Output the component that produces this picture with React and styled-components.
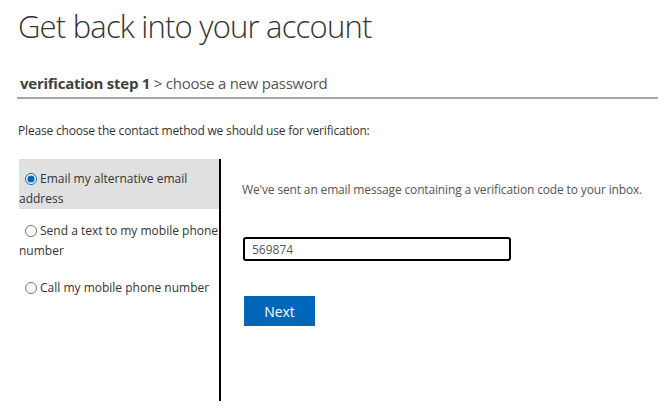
import React, { useState } from 'react';
import styled, { createGlobalStyle } from 'styled-components';

const GlobalStyle = createGlobalStyle`
  body {
    margin: 0;
    background: #fff;
    font-family: "Open Sans", "Noto Sans", Arial, sans-serif;
    color: #333;
  }
`;

const Page = styled.div`
  padding: 0 14px 0 17px;
`;

const Title = styled.h1`
  margin: 0;
  padding: 6px 0 0 1px;
  font-size: 31px;
  font-weight: 300;
  letter-spacing: -0.8px;
  line-height: 40px;
  color: #333;
`;

const StepBar = styled.div`
  margin-top: 26px;
  padding: 0 0 3px 3px;
  font-size: 15px;
  letter-spacing: -0.25px;
  line-height: 22px;
  color: #555;
  border-bottom: 2px solid #a6a6a6;
`;

const Current = styled.span`
  font-weight: 700;
  color: #404040;
`;

const Prompt = styled.p`
  margin: 23px 0 0 1px;
  font-size: 12px;
  letter-spacing: -0.18px;
  line-height: 18px;
  color: #333;
`;

const Methods = styled.div`
  display: flex;
  margin-top: 19px;
  padding-left: 2px;
`;

const Options = styled.div`
  width: 200px;
  min-height: 242px;
  border-right: 2px solid #000;
`;

const Option = styled.label`
  display: block;
  margin-top: ${(p) => p.$gap}px;
  padding: ${(p) => p.$top}px 0 0 0;
  font-size: 12px;
  line-height: 20px;
  color: #333;
  background: ${(p) => (p.$active ? '#e0e0e0' : 'transparent')};
  cursor: pointer;

  input {
    margin: 0 3px 0 6px;
    width: 12px;
    height: 12px;
    vertical-align: -2px;
    accent-color: #0067b8;
  }
`;

const Detail = styled.div`
  padding: 22px 0 0 21px;
`;

const Message = styled.p`
  margin: 0;
  font-size: 12px;
  letter-spacing: -0.15px;
  line-height: 18px;
  color: #555;
`;

const CodeInput = styled.input`
  display: block;
  box-sizing: border-box;
  margin: 38px 0 0 1px;
  width: 268px;
  height: 24px;
  padding: 0 7px;
  border: 2px solid #000;
  border-radius: 3px;
  font-family: inherit;
  font-size: 12px;
  color: #555;
  outline: none;
`;

const NextButton = styled.button`
  display: block;
  margin: 35px 0 0 2px;
  width: 71px;
  height: 30px;
  border: none;
  background: #0067b8;
  color: #fff;
  font-family: inherit;
  font-size: 14px;
  cursor: pointer;
`;

const methods = [
  { id: 'email', label: 'Email my alternative email address', gap: 0, top: 10 },
  { id: 'text', label: 'Send a text to my mobile phone number', gap: 0, top: 12 },
  { id: 'call', label: 'Call my mobile phone number', gap: 7, top: 10 },
];

export default function App() {
  const [method, setMethod] = useState('email');
  const [code, setCode] = useState('569874');

  return (
    <Page>
      <GlobalStyle />
      <Title>Get back into your account</Title>
      <StepBar>
        <Current>verification step 1</Current> &gt; choose a new password
      </StepBar>
      <Prompt>Please choose the contact method we should use for verification:</Prompt>
      <Methods>
        <Options>
          {methods.map((m) => (
            <Option key={m.id} $active={method === m.id} $gap={m.gap} $top={m.top}>
              <input
                type="radio"
                name="method"
                checked={method === m.id}
                onChange={() => setMethod(m.id)}
              />
              {m.label}
            </Option>
          ))}
        </Options>
        <Detail>
          <Message>We've sent an email message containing a verification code to your inbox.</Message>
          <CodeInput value={code} onChange={(e) => setCode(e.target.value)} />
          <NextButton>Next</NextButton>
        </Detail>
      </Methods>
    </Page>
  );
}
